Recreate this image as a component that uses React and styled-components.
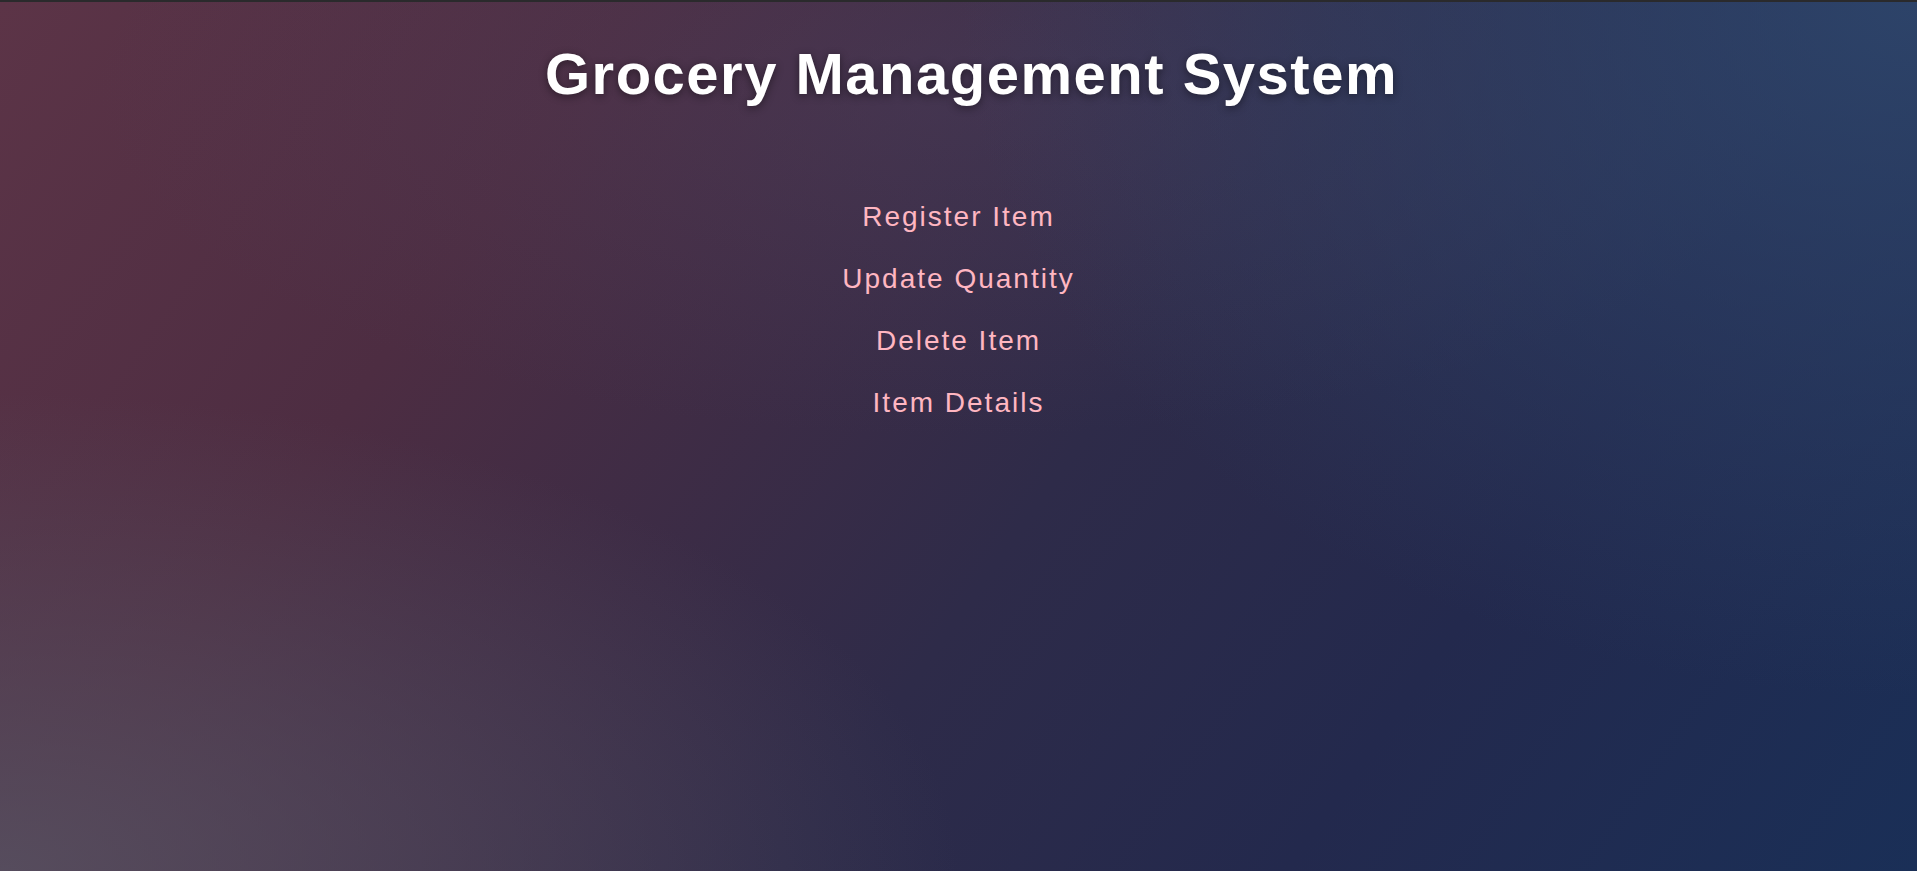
import React from "react";
import styled, { createGlobalStyle } from "styled-components";

const GlobalStyle = createGlobalStyle`
  html, body {
    margin: 0;
    padding: 0;
    height: 100%;
  }
  #root {
    min-height: 100%;
  }
`;

const links = ["Register Item", "Update Quantity", "Delete Item", "Item Details"];

const App = () => {
  return (
    <>
      <GlobalStyle />
      <Page>
        <Title>Grocery Management System</Title>
        <Menu>
          {links.map((label) => (
            <MenuLink key={label} href="#">
              {label}
            </MenuLink>
          ))}
        </Menu>
      </Page>
    </>
  );
};

export default App;

const Page = styled.div`
  box-sizing: border-box;
  min-height: 871px;
  border-top: 2px solid #2a2a2c;
  font-family: "Liberation Sans", Arial, sans-serif;
  display: flex;
  flex-direction: column;
  align-items: center;
  background:
    radial-gradient(ellipse 50% 55% at 0% 100%, rgba(88, 84, 100, 0.8), rgba(88, 84, 100, 0) 100%),
    radial-gradient(ellipse 50% 80% at 100% 0%, rgba(46, 70, 108, 0.9), rgba(46, 70, 108, 0) 100%),
    radial-gradient(ellipse 45% 40% at 50% 10%, rgba(80, 70, 100, 0.35), rgba(80, 70, 100, 0) 100%),
    linear-gradient(125deg, #5c3447 0%, #4d2d42 25%, #2e2b49 55%, #23294d 75%, #1a2f57 100%);
`;

const Title = styled.h1`
  margin: 37px 0 0;
  padding-left: 26px;
  font-size: 58px;
  font-weight: 700;
  letter-spacing: 1.5px;
  line-height: 1.2;
  color: #ffffff;
  text-shadow: 0 2px 8px rgba(0, 0, 0, 0.45);
`;

const Menu = styled.nav`
  margin-top: 91px;
  display: flex;
  flex-direction: column;
  align-items: center;
  gap: 28px;
`;

const MenuLink = styled.a`
  font-size: 28px;
  line-height: 34px;
  letter-spacing: 2px;
  color: #ffb6c1;
  text-decoration: none;
`;
